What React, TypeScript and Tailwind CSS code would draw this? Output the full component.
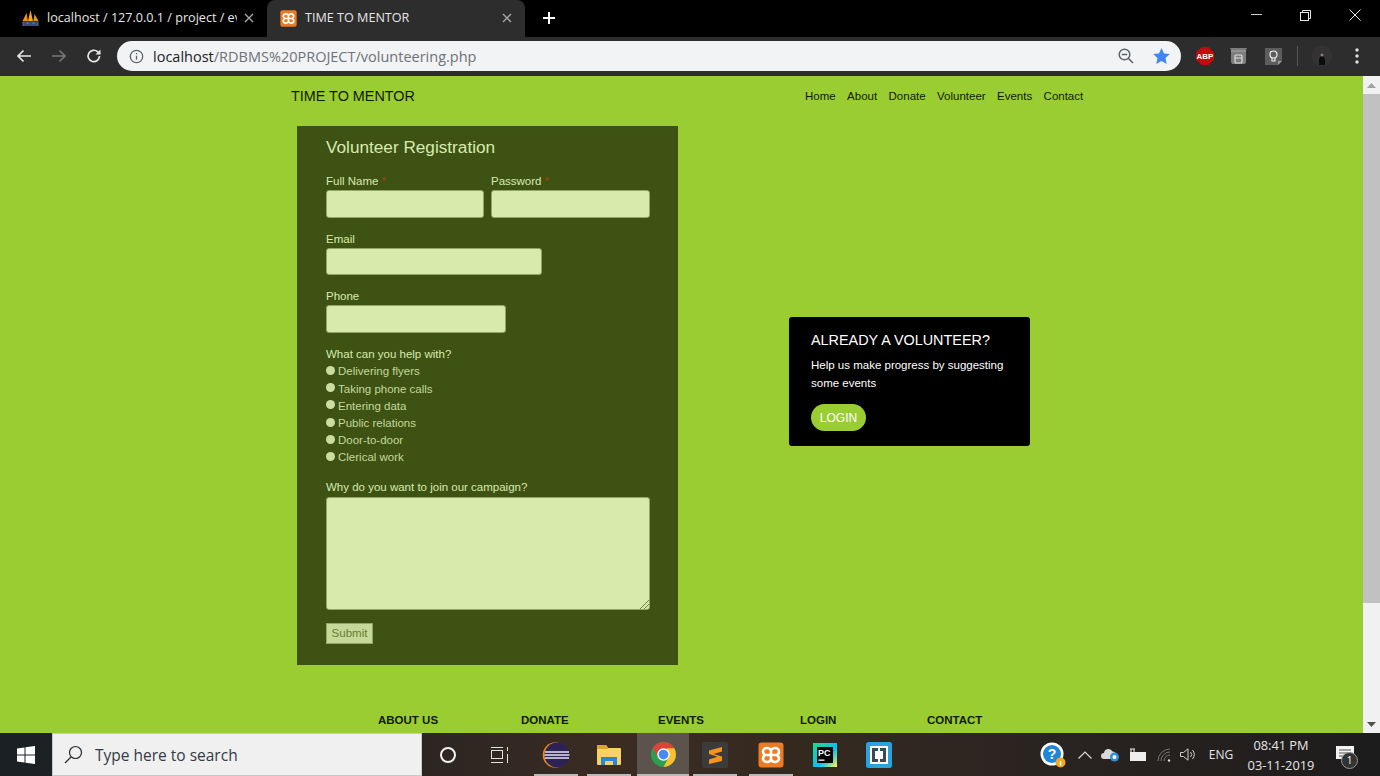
import React from "react";

const sans = "font-['Liberation_Sans',Arial,sans-serif]";
const ui = "font-['Open_Sans','Noto_Sans',sans-serif]";

function Xampp({ size = 18 }: { size?: number }) {
  return (
    <svg width={size} height={size} viewBox="0 0 26 26">
      <rect x="0.500" y="0.500" width="25" height="25" rx="3" fill="#ee7a22" />
      <path
        d="M9 6c-2.500 0-4 1.700-4 3.700 0 1.600 1 2.700 2.300 3.300C6 13.600 5 14.700 5 16.300 5 18.300 6.500 20 9 20c1.800 0 3.200-.8 4-2 .8 1.200 2.200 2 4 2 2.500 0 4-1.700 4-3.700 0-1.600-1-2.700-2.300-3.300 1.300-.6 2.300-1.700 2.300-3.300C21 7.700 19.500 6 17 6c-1.800 0-3.200.8-4 2-.8-1.200-2.200-2-4-2z"
        fill="none"
        stroke="#fff"
        strokeWidth="2.600"
      />
      <path d="M8 13h10M13 8v10" stroke="#fff" strokeWidth="2.600" />
    </svg>
  );
}

function Pma() {
  return (
    <svg width="19" height="18" viewBox="0 0 18 18">
      <path d="M1 12 5 4l1.500 8z" fill="#e8921c" />
      <path d="M6.500 12 9 1l2.500 11z" fill="#f3a81f" />
      <path d="M12 12l1-7 4 7z" fill="#e8921c" />
      <rect x="1" y="12.500" width="16" height="4.500" fill="#5a6f9c" />
      <path d="M2 14h3M7 14h4M13 14h3M2 16h14" stroke="#1e2b4d" strokeWidth="1" />
    </svg>
  );
}

function TabClose() {
  return (
    <svg width="10" height="10" viewBox="0 0 10 10" stroke="#a8a8a8" strokeWidth="1.400">
      <path d="M1 1l8 8M9 1l-8 8" />
    </svg>
  );
}

function Eclipse() {
  return (
    <svg width="28" height="28" viewBox="0 0 28 28">
      <circle cx="13.500" cy="14" r="12.800" fill="#e8891c" />
      <circle cx="15" cy="14" r="12.500" fill="#2c2255" />
      <path d="M3 11h24M2.500 14h25M3 17h24" stroke="#e6e4f2" strokeWidth="1.500" />
    </svg>
  );
}

function Folder() {
  return (
    <svg width="24" height="22" viewBox="0 0 24 22">
      <path d="M0 2a1 1 0 0 1 1-1h8l2 3h12a1 1 0 0 1 1 1v15a1 1 0 0 1-1 1H1a1 1 0 0 1-1-1z" fill="#f7d266" />
      <path d="M0 2a1 1 0 0 1 1-1h8l2 2.500v1.500H0z" fill="#dba531" />
      <path d="M4 21v-8h16v8h-4v-4H8v4z" fill="#2a86d6" />
    </svg>
  );
}

function ChromeLogo() {
  return (
    <svg width="25" height="25" viewBox="4 4 40 40">
      <circle cx="24" cy="24" r="20" fill="#2e9e4f" />
      <path d="M24 4a20 20 0 0 1 17.300 10L24 16 15 28 6.700 14A20 20 0 0 1 24 4z" fill="#db4437" />
      <path d="M41.300 14A20 20 0 0 1 24 44L33 27l-4-13z" fill="#fbc02d" />
      <circle cx="24" cy="24" r="10" fill="#fff" />
      <circle cx="24" cy="24" r="7.800" fill="#4a8af4" />
    </svg>
  );
}

function Sublime() {
  return (
    <svg width="26" height="26" viewBox="0 0 26 26">
      <rect width="26" height="26" rx="2" fill="#3b3b3b" />
      <path d="M20 5v4.500L11.500 12l8.500 2.500V19L7 22v-4.500l8.500-2.800L7 12V8.500z" fill="#f7941d" />
    </svg>
  );
}

function PyCharm() {
  return (
    <svg width="24" height="24" viewBox="0 0 24 24">
      <defs>
        <linearGradient id="pcg" x1="0" y1="0" x2="1" y2="1">
          <stop offset="0" stopColor="#21d789" />
          <stop offset="0.6" stopColor="#07c3f2" />
          <stop offset="1" stopColor="#fcf84a" />
        </linearGradient>
      </defs>
      <rect width="24" height="24" fill="url(#pcg)" />
      <rect x="4" y="4" width="16" height="16" fill="#000" />
      <text x="5" y="13" fontSize="9" fontWeight="700" fill="#fff" fontFamily="Liberation Sans">PC</text>
      <rect x="5.500" y="16.500" width="6" height="1.300" fill="#fff" />
    </svg>
  );
}

function Brackets() {
  return (
    <svg width="26" height="26" viewBox="0 0 26 26">
      <rect width="26" height="26" rx="2.500" fill="#2aa3dc" />
      <rect x="4" y="4" width="18" height="18" fill="#fff" />
      <path d="M6 6h6v3h-3v8h3v3H6zM20 6h-6v3h3v8h-3v3h6z" fill="#3b4a52" />
    </svg>
  );
}

function Slot({ children, mark, active, className = "" }: { children: React.ReactNode; mark?: boolean; active?: boolean; className?: string }) {
  return (
    <div className={`relative h-full w-[52px] shrink-0 flex items-center justify-center ${active ? "bg-[#5c534c]" : ""} ${className}`}>
      {children}
      {mark && <span className={`absolute bottom-0 h-[2px] bg-[#b9b9b9] ${active ? "left-0 right-0" : "left-[4px] right-[4px]"}`} />}
    </div>
  );
}

const helpItems = ["Delivering flyers", "Taking phone calls", "Entering data", "Public relations", "Door-to-door", "Clerical work"];

function Field({ label, star, width }: { label: string; star?: boolean; width: string }) {
  return (
    <div>
      <div className="h-[14px] text-[11.500px] leading-[14px] text-[#d7ebad]">
        {label}
        {star && <span className="text-[#a0421a]"> *</span>}
      </div>
      <div className={`mt-[2px] h-[27.500px] rounded-[3px] border border-[#8fa864] bg-[#d7ebad] ${width}`} />
    </div>
  );
}

export default function App() {
  return (
    <div className={`flex h-[776px] w-[1380px] flex-col overflow-hidden ${sans}`}>
      {/* tab strip */}
      <div className="flex h-[37px] shrink-0 items-stretch bg-black">
        <div className={`flex w-[267px] shrink-0 items-center pb-[1px] pl-[21px] pr-[13px] ${ui}`}>
          <Pma />
          <span className="ml-[7px] w-[190px] overflow-hidden whitespace-nowrap text-[12.600px] text-[#e6e6e6]">localhost / 127.0.0.1 / project / ev</span>
          <span className="ml-auto flex"><TabClose /></span>
        </div>
        <div className={`flex w-[258px] shrink-0 items-center rounded-t-[8px] bg-[#2d2d2d] pb-[1px] pl-[13px] pr-[13px] ${ui}`}>
          <Xampp size={17} />
          <span className="ml-[8px] whitespace-nowrap text-[12.600px] text-[#e6e6e6]">TIME TO MENTOR</span>
          <span className="ml-auto flex"><TabClose /></span>
        </div>
        <div className="ml-[17px] flex items-center pb-[2px]">
          <svg width="14" height="14" viewBox="0 0 14 14" stroke="#fff" strokeWidth="2"><path d="M7 1v12M1 7h12" /></svg>
        </div>
        <div className="ml-auto flex items-start">
          <div className="flex h-[29px] w-[48px] items-center justify-center pr-[3px]">
            <svg width="11" height="1" viewBox="0 0 11 1"><rect width="11" height="1" fill="#cfcfcf" /></svg>
          </div>
          <div className="flex h-[30px] w-[48px] items-center justify-center pr-[2px]">
            <svg width="11" height="11" viewBox="0 0 11 11" fill="none" stroke="#e8e8e8"><rect x="0.500" y="2.500" width="8" height="8" /><path d="M2.500 2.500v-2h8v8h-2" /></svg>
          </div>
          <div className="flex h-[30px] w-[50px] items-center justify-center">
            <svg width="12" height="12" viewBox="0 0 12 12" stroke="#e8e8e8"><path d="M.5.500l11 11M11.500.500l-11 11" /></svg>
          </div>
        </div>
      </div>

      {/* toolbar */}
      <div className="flex h-[39px] shrink-0 items-center bg-[#2d2d2d] pb-[1px]">
        <div className="ml-[16px] flex w-[101px] items-center gap-[19px]">
          <svg width="16" height="14" viewBox="0 0 16 14" fill="none" stroke="#e6e6e6" strokeWidth="1.700"><path d="M15 7H2M7.500 1.500 2 7l5.500 5.500" /></svg>
          <svg width="16" height="14" viewBox="0 0 16 14" fill="none" stroke="#777" strokeWidth="1.700"><path d="M1 7h13M8.500 1.500 14 7l-5.500 5.500" /></svg>
          <svg width="16" height="16" viewBox="0 0 16 16" fill="none" stroke="#e6e6e6" strokeWidth="1.700"><path d="M13.500 8A5.700 5.700 0 1 1 11.800 3.900L14 6" /><path d="M14.500 1.500V6.500H9.500" fill="#e6e6e6" stroke="none" /></svg>
        </div>
        <div className="flex h-[30px] w-[1064px] shrink-0 items-center rounded-full bg-[#f1f3f4] pl-[12px] pr-[11px]">
          <svg width="15" height="15" viewBox="0 0 15 15" fill="none" stroke="#5f6368" strokeWidth="1.300"><circle cx="7.500" cy="7.500" r="6.200" /><path d="M7.500 6.800v4M7.500 4v1.300" /></svg>
          <span className={`ml-[9px] pt-[2px] text-[14.500px] whitespace-nowrap text-[#6d7278] ${ui}`}><span className="text-[#202124]">localhost</span>/RDBMS%20PROJECT/volunteering.php</span>
          <div className="ml-auto flex items-center gap-[19px]">
            <svg width="16" height="16" viewBox="0 0 16 16" fill="none" stroke="#5f6368" strokeWidth="1.500"><circle cx="6.500" cy="6.500" r="5.300" /><path d="M3.800 6.500h5.400M10.500 10.500 15 15" /></svg>
            <svg width="17" height="16" viewBox="0 0 24 23"><path d="M12 0l3.600 8 8.400.8-6.300 5.700 1.800 8.500L12 18.600 4.500 23l1.800-8.500L0 8.800 8.400 8z" fill="#4285f4" /></svg>
          </div>
        </div>
        <div className="ml-[15px] flex items-center">
          <svg width="18" height="18" viewBox="0 0 18 18"><path d="M5.500 0h7L18 5.500v7L12.500 18h-7L0 12.500v-7z" fill="#c40a0a" /><text x="9" y="12" textAnchor="middle" fontSize="8" fontWeight="700" fill="#fff" fontFamily="Liberation Sans">ABP</text></svg>
          <svg className="ml-[16px]" width="17" height="18" viewBox="0 0 17 18"><path d="M0 1h17l-1 2v12l-1 2H2l-1-2V3z" fill="#7d7d7d" /><path d="M1 4h15" stroke="#a5a5a5" /><rect x="5" y="8" width="7" height="8" rx="1" fill="none" stroke="#ddd" strokeWidth="1.200" /><path d="M5 11h7" stroke="#ddd" /></svg>
          <svg className="ml-[18px]" width="17" height="17" viewBox="0 0 17 17"><path d="M0 0h17v13l-4 4H0z" fill="#5d5d5d" /><path d="M13 17v-4h4z" fill="#999" /><circle cx="8.500" cy="6.500" r="3.500" fill="none" stroke="#eee" strokeWidth="1.200" /><path d="M7 10v3h3v-3" fill="none" stroke="#eee" strokeWidth="1.200" /></svg>
          <span className="ml-[15px] h-[20px] w-px bg-[#555]" />
          <svg className="ml-[13px]" width="22" height="22" viewBox="0 0 22 22"><circle cx="11" cy="11" r="10.500" fill="#333" /><path d="M8 20v-6l2-3h2l2 3v6z" fill="#0c0c0c" /><circle cx="11" cy="10" r="1.500" fill="#9c7660" /></svg>
          <svg className="ml-[22px]" width="4" height="16" viewBox="0 0 4 16" fill="#e0e0e0"><circle cx="2" cy="2" r="1.700" /><circle cx="2" cy="8" r="1.700" /><circle cx="2" cy="14" r="1.700" /></svg>
        </div>
      </div>

      {/* page */}
      <div className="flex h-[657px] shrink-0">
        <div className="w-[1363px] shrink-0 overflow-hidden bg-[#9acd32] text-black">
          <div className="flex h-[42px] items-center pl-[291px]">
            <span className="w-[514px] text-[14.400px] text-[#111a00]">TIME TO MENTOR</span>
            <nav className="flex gap-[11.400px] text-[11.500px] text-[#111a00]">
              <span>Home</span><span>About</span><span>Donate</span><span>Volunteer</span><span>Events</span><span>Contact</span>
            </nav>
          </div>

          <div className="mt-[8px] flex items-start pl-[297px]">
            <div className="h-[539px] w-[381px] shrink-0 bg-[#3e5214] pl-[29px] pt-[11px] text-[#d7ebad]">
              <h1 className="text-[17.200px] leading-[20px] text-[#d7ebad]">Volunteer Registration</h1>
              <div className="mt-[17px] flex gap-[7px]">
                <Field label="Full Name" star width="w-[158px]" />
                <Field label="Password" star width="w-[159px]" />
              </div>
              <div className="mt-[14px]"><Field label="Email" width="w-[216px]" /></div>
              <div className="mt-[14px]"><Field label="Phone" width="w-[180px]" /></div>
              <div className="mt-[14px] text-[11.500px] leading-[14px]">What can you help with?</div>
              <ul className="mt-[3px]">
                {helpItems.map((t) => (
                  <li key={t} className="flex h-[17.200px] items-center text-[11.500px] text-[#c4d99a]">
                    <span className="mb-[3px] h-[9px] w-[9px] rounded-full bg-[#c9dea0]" />
                    <span className="ml-[3px]">{t}</span>
                  </li>
                ))}
              </ul>
              <div className="mt-[13px] text-[11.500px] leading-[14px]">Why do you want to join our campaign?</div>
              <div className="relative mt-[3px] h-[113px] w-[324px] rounded-[3px] border border-[#8fa864] bg-[#d7ebad]">
                <svg className="absolute bottom-0 right-0" width="9" height="9" viewBox="0 0 9 9" stroke="#6d7f4a"><path d="M0 9l9-9M4 9l5-5" /></svg>
              </div>
              <button className="mt-[13.500px] h-[21px] w-[47px] border border-[#8fa864] bg-[#c4d99a] p-0 text-center text-[11.500px] text-[#66802f]">Submit</button>
            </div>

            <div className="ml-[111px] mt-[191px] h-[129px] w-[241px] shrink-0 rounded-[3px] bg-black pl-[22px] pt-[14px] text-white">
              <h2 className="text-[14.400px] leading-[18px]">ALREADY A VOLUNTEER?</h2>
              <p className="mt-[7px] w-[200px] text-[11.500px] leading-[18px]">Help us make progress by suggesting some events</p>
              <div className="mt-[12px] flex h-[27px] w-[55px] items-center justify-center rounded-full bg-[#9acd32] text-[12px]">LOGIN</div>
            </div>
          </div>

          <div className="mt-[48px] flex pl-[378px] text-[11.500px] font-bold leading-[14px] text-[#111a00]">
            <span className="w-[143px]">ABOUT US</span>
            <span className="w-[137px]">DONATE</span>
            <span className="w-[142px]">EVENTS</span>
            <span className="w-[127px]">LOGIN</span>
            <span>CONTACT</span>
          </div>
        </div>

        {/* scrollbar */}
        <div className="flex w-[17px] shrink-0 flex-col bg-[#f1f1f1]">
          <div className="flex h-[18px] items-center justify-center">
            <svg width="9" height="5" viewBox="0 0 9 5"><path d="M4.500 0 9 5H0z" fill="#a3a3a3" /></svg>
          </div>
          <div className="h-[509px] bg-[#c1c1c1]" />
          <div className="mt-auto flex h-[17px] items-center justify-center">
            <svg width="9" height="5" viewBox="0 0 9 5"><path d="M0 0h9L4.500 5z" fill="#505050" /></svg>
          </div>
        </div>
      </div>

      {/* taskbar */}
      <div className="flex h-[43px] shrink-0 items-stretch bg-[linear-gradient(90deg,#1b2024_0%,#2b2522_30%,#3b2c22_45%,#33291f_60%,#2a2421_75%,#1d1c1c_100%)]">
        <div className="flex w-[52px] shrink-0 items-center justify-center">
          <svg width="18" height="18" viewBox="0 0 18 18" fill="#fff"><path d="M0 2.500 7.500 1.400v7.200H0zM8.500 1.300 18 0v8.600H8.500zM0 9.500h7.500v7.100L0 15.500zM8.500 9.500H18V18l-9.500-1.300z" /></svg>
        </div>
        <div className={`flex w-[370px] shrink-0 items-center border border-[#c9c9c9] bg-[#f0f0f0] pl-[11px] ${ui}`}>
          <svg width="19" height="19" viewBox="0 0 19 19" fill="none" stroke="#2b2b2b" strokeWidth="1.200"><circle cx="11.500" cy="7.500" r="6" /><path d="M7 12 1 18" /></svg>
          <span className="ml-[12px] pt-[2px] text-[15.500px] text-[#333b45]">Type here to search</span>
        </div>
        <Slot>
          <svg width="18" height="18" viewBox="0 0 18 18" fill="none" stroke="#f2f2f2" strokeWidth="2"><circle cx="9" cy="9" r="7" /></svg>
        </Slot>
        <Slot>
          <svg width="20" height="18" viewBox="0 0 20 18" fill="none" stroke="#e2e2e2"><rect x="1.500" y="4.500" width="11" height="8" /><path d="M1 1.500h12M1 16.500h12M17.500 1v4M17.500 8v9" /></svg>
        </Slot>
        <Slot mark className="ml-[4px]"><Eclipse /></Slot>
        <Slot mark className="ml-[1px]"><Folder /></Slot>
        <Slot mark active className="ml-[2px]"><ChromeLogo /></Slot>
        <Slot mark><Sublime /></Slot>
        <Slot mark className="ml-[4px]"><Xampp size={26} /></Slot>
        <Slot className="ml-[2px]"><PyCharm /></Slot>
        <Slot className="ml-[2px]"><Brackets /></Slot>

        <div className={`ml-auto flex items-center pr-[15px] text-[#e6e6e6] ${ui}`}>
          <div className="relative flex w-[26px] justify-center">
            <svg width="26" height="26" viewBox="0 0 26 26">
              <circle cx="12" cy="12" r="11.500" fill="#fff" />
              <circle cx="12" cy="12" r="9" fill="#1f86d8" />
              <text x="12" y="17" textAnchor="middle" fontSize="14" fontWeight="700" fill="#fff" fontFamily="Liberation Sans">?</text>
              <circle cx="20.500" cy="20.500" r="5" fill="#f5a623" />
              <rect x="19.800" y="19" width="1.500" height="4.500" fill="#fff" />
            </svg>
          </div>
          <div className="ml-[8px] flex w-[22px] justify-center">
            <svg width="14" height="8" viewBox="0 0 14 8" fill="none" stroke="#d8d8d8" strokeWidth="1.200"><path d="M.5 7.500 7 1l6.500 6.500" /></svg>
          </div>
          <div className="ml-[3px] flex w-[22px] justify-center">
            <svg width="19" height="15" viewBox="0 0 19 15"><path d="M3 12a3 3 0 0 1 0-6 4.500 4.500 0 0 1 8.500-1.500A3.500 3.500 0 0 1 15 8v4z" fill="#d9d9d9" /><circle cx="13.500" cy="10" r="4.500" fill="#2e8fd8" /><circle cx="13.500" cy="10" r="2" fill="#fff" /></svg>
          </div>
          <div className="ml-[5px] flex w-[22px] justify-center">
            <svg width="18" height="13" viewBox="0 0 18 13" fill="none" stroke="#eee"><rect x="2.500" y="4.500" width="15" height="8" fill="#eee" /><path d="M3 4V1M6 4V1M2 1h5" /></svg>
          </div>
          <div className="ml-[5px] flex w-[22px] justify-center">
            <svg width="14" height="14" viewBox="0 0 14 14" fill="none" stroke="#777" strokeWidth="1"><path d="M1 13A12 12 0 0 1 13 1M4 13a9 9 0 0 1 9-9M7 13a6 6 0 0 1 6-6" /><circle cx="12" cy="12.500" r="1.200" fill="#ddd" stroke="none" /></svg>
          </div>
          <div className="ml-[2px] flex w-[22px] justify-center">
            <svg width="16" height="13" viewBox="0 0 16 13" fill="none" stroke="#cfcfcf"><path d="M.5 4.500h3L8 .8v11.400L3.500 8.500h-3zM10.500 4a3.500 3.500 0 0 1 0 5M12.500 2a6.500 6.500 0 0 1 0 9" /></svg>
          </div>
          <div className="ml-[5px] w-[34px] text-center text-[12px]">ENG</div>
          <div className="ml-[5px] w-[76px] text-center text-[12.800px] leading-[20px]">
            <div>08:41 PM</div>
            <div>03-11-2019</div>
          </div>
          <div className="relative ml-[6px] flex w-[40px] justify-center">
            <svg width="18" height="17" viewBox="0 0 18 17"><path d="M0 0h18v13H10l-3 4v-4H0z" fill="#f2f2f2" /><path d="M3 4h12M3 7h12M3 10h8" stroke="#555" /></svg>
            <span className="absolute left-[16px] top-[6px] flex h-[17px] w-[17px] items-center justify-center rounded-full border border-[#999] bg-[#333] text-[10px] text-white">1</span>
          </div>
        </div>
      </div>
    </div>
  );
}
